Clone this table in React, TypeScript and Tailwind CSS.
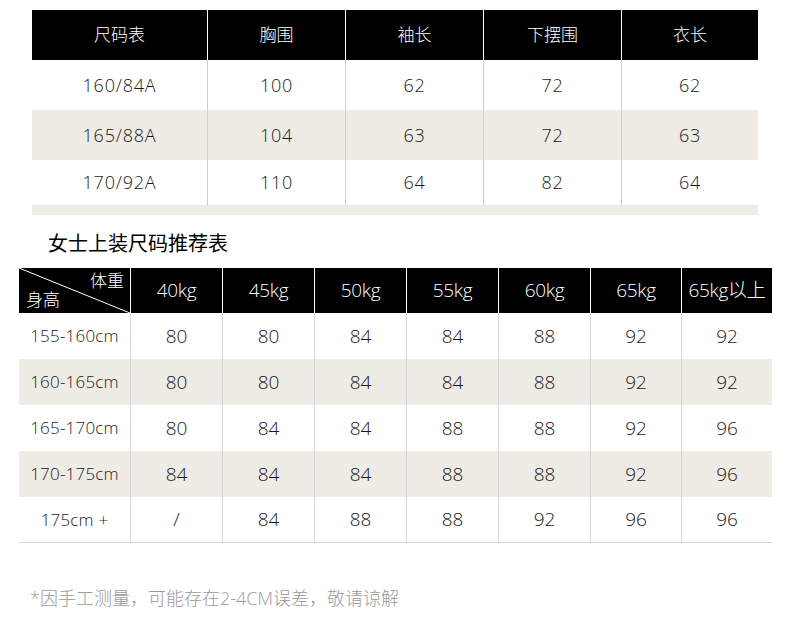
import React from 'react';

const sizeRows = [
  ['160/84A', '100', '62', '72', '62'],
  ['165/88A', '104', '63', '72', '63'],
  ['170/92A', '110', '64', '82', '64'],
];

const weights = ['40kg', '45kg', '50kg', '55kg', '60kg', '65kg', '65kg以上'];

const recRows = [
  ['155-160cm', '80', '80', '84', '84', '88', '92', '92'],
  ['160-165cm', '80', '80', '84', '84', '88', '92', '92'],
  ['165-170cm', '80', '84', '84', '88', '88', '92', '96'],
  ['170-175cm', '84', '84', '84', '88', '88', '92', '96'],
  ['175cm +', '/', '84', '88', '88', '92', '96', '96'],
];

const font = { fontFamily: '"Open Sans", "Noto Sans CJK SC", sans-serif' };

const App: React.FC = () => {
  return (
    <div className="w-[790px] h-[620px] bg-white overflow-hidden font-light" style={font}>
      {/* size chart */}
      <div className="ml-[32px] mt-[10px] w-[726px]">
        <div className="grid grid-cols-[175px_138px_138px_138px_137px] h-[50px] bg-black text-white text-[17px]">
          {['尺码表', '胸围', '袖长', '下摆围', '衣长'].map((h, i) => (
            <div key={h} className={`flex items-center justify-center ${i > 0 ? 'border-l border-white' : ''}`}>
              {h}
            </div>
          ))}
        </div>
        {sizeRows.map((row, r) => (
          <div
            key={row[0]}
            className={`grid grid-cols-[175px_138px_138px_138px_137px] ${r === 2 ? 'h-[45px]' : 'h-[50px]'} ${r === 1 ? 'bg-[#efebe5]' : 'bg-white'} text-[18px] tracking-[0.8px] text-[#1a1a1a]`}
          >
            {row.map((c, i) => (
              <div key={i} className={`flex items-center justify-center ${i > 0 ? 'border-l border-[#cfcfcf]' : ''}`}>
                {c}
              </div>
            ))}
          </div>
        ))}
        <div className="h-[10px] bg-[#efebe5]" />
      </div>

      <div className="ml-[48px] mt-[17px] text-[20px] leading-[24px] text-black font-normal">女士上装尺码推荐表</div>

      {/* recommendation chart */}
      <div className="ml-[19px] mt-[12px] w-[753px]">
        <div className="grid grid-cols-[111px_92px_92px_92px_92px_92px_91px_91px] h-[45px] bg-black text-white text-[19px]">
          <div className="relative">
            <svg className="absolute inset-0" width="111" height="45">
              <line x1="0" y1="0" x2="111" y2="45" stroke="white" strokeWidth="1" />
            </svg>
            <span className="absolute right-[6px] top-[2px] text-[17px] leading-[22px]">体重</span>
            <span className="absolute left-[7px] bottom-[2px] text-[17px] leading-[22px]">身高</span>
          </div>
          {weights.map((w) => (
            <div key={w} className="flex items-center justify-center border-l border-white whitespace-nowrap tracking-[-0.3px]">
              {w}
            </div>
          ))}
        </div>
        {recRows.map((row, r) => (
          <div
            key={row[0]}
            className={`grid grid-cols-[111px_92px_92px_92px_92px_92px_91px_91px] h-[46px] ${r % 2 === 1 ? 'bg-[#efebe5]' : 'bg-white'} ${r === 4 ? 'border-b border-[#d6d6d6]' : ''} text-[19px] text-[#1a1a1a]`}
          >
            {row.map((c, i) => (
              <div
                key={i}
                className={`flex items-center justify-center whitespace-nowrap ${i > 0 ? 'border-l border-[#d6d6d6]' : 'text-[17px] tracking-[0.2px]'}`}
              >
                {c}
              </div>
            ))}
          </div>
        ))}
      </div>

      <div className="ml-[30px] mt-[44px] text-[18px] leading-[22px] text-[#9a9a9a]">
        *因手工测量，可能存在2-4CM误差，敬请谅解
      </div>
    </div>
  );
};

export default App;
